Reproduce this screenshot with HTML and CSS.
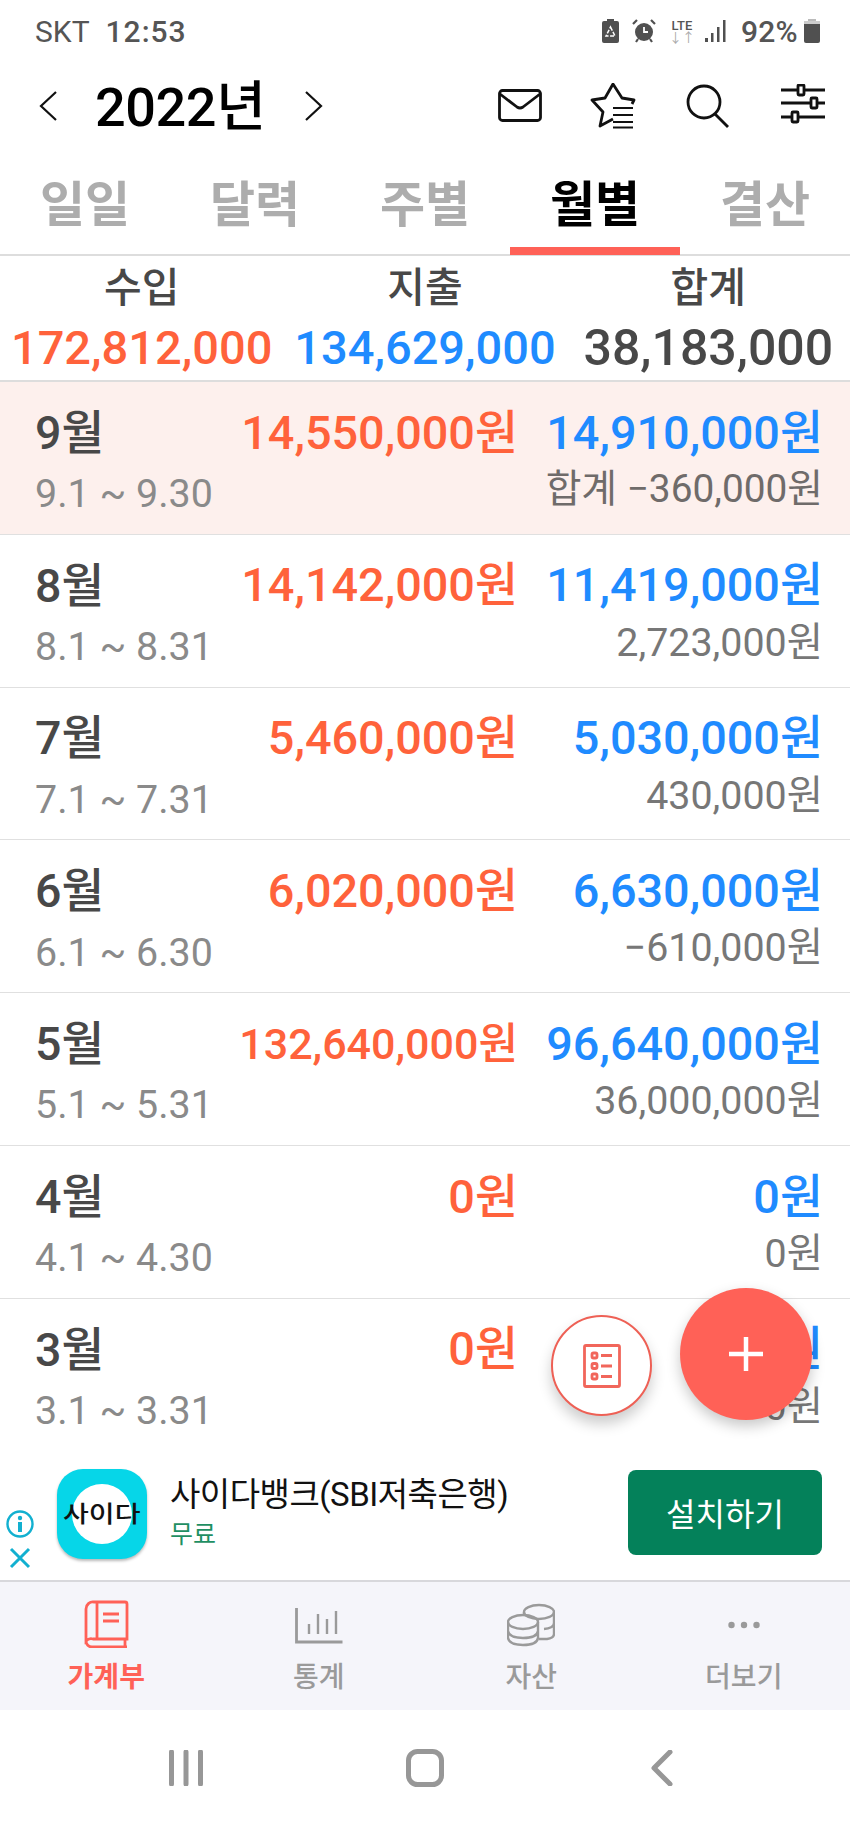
FILE: index.html
```html
<!DOCTYPE html>
<html lang="ko">
<head>
<meta charset="utf-8">
<title>가계부</title>
<link rel="stylesheet" href="styles.css">
</head>
<body>
<div class="phone">
  <div class="status">
    <div class="status-left"><span>SKT</span><span>12:53</span></div>
    <div class="status-right">
      <svg class="ic-batrec" viewBox="0 0 17 24"><path fill="#505050" d="M5 0h7v2h3a2 2 0 0 1 2 2v18a2 2 0 0 1-2 2H2a2 2 0 0 1-2-2V4a2 2 0 0 1 2-2h3z"/><path fill="none" stroke="#fff" stroke-width="1.5" stroke-dasharray="4 1.500" d="M8.500 8l4.500 9H4z"/></svg>
      <svg class="ic-alarm" viewBox="0 0 24 24"><circle cx="12" cy="13" r="9" fill="#505050"/><path d="M1 5l4-4M23 5l-4-4M6 20l-2 3M18 20l2 3" stroke="#505050" stroke-width="2.200" fill="none"/><path d="M12 8v5h4" stroke="#fff" stroke-width="1.800" fill="none"/></svg>
      <div class="lte"><span class="lte-t">LTE</span><span class="lte-a">↓↑</span></div>
      <svg class="ic-signal" viewBox="0 0 22 24"><g fill="#505050"><rect x="0" y="19" width="3" height="4"/><rect x="6" y="14" width="2.500" height="9"/><rect x="12" y="8" width="2.500" height="15"/><rect x="18" y="1" width="2.500" height="22"/></g></svg>
      <span class="pct">92%</span>
      <svg class="ic-bat" viewBox="0 0 16 24"><rect x="4" y="0" width="8" height="3" fill="#bbb"/><rect x="0" y="2" width="16" height="4" fill="#ccc"/><path d="M0 5h16v17a2 2 0 0 1-2 2H2a2 2 0 0 1-2-2z" fill="#505050"/></svg>
    </div>
  </div>

  <header class="header">
    <div class="year-nav">
      <svg class="chev" viewBox="0 0 18 30"><path d="M17 1L2 15l15 14" /></svg>
      <span class="year">2022년</span>
      <svg class="chev" viewBox="0 0 18 30"><path d="M1 1l15 14L1 29" /></svg>
    </div>
    <div class="actions">
      <svg class="ic-mail" viewBox="0 0 44 34"><rect x="1.500" y="1.500" width="41" height="30" rx="3"/><path d="M2 5l17 13q3 2 6 0L42 5"/></svg>
      <svg class="ic-star" viewBox="0 0 46 46"><path d="M23 36L10 43l3-14L2 17l13-2L23 1l9 14 12 2-2 4"/><path d="M23 25h20M23 32h20M23 39h20M23 44.500h20" stroke-width="1.800"/></svg>
      <svg class="ic-search" viewBox="0 0 44 44"><circle cx="18" cy="18" r="16"/><path d="M29 30l13 13"/></svg>
      <svg class="ic-sliders" viewBox="0 0 44 40"><path d="M0 6h17M24 6h20M0 19h30M37 19h7M0 33h10M17 33h27"/><rect x="17" y="1" width="6" height="10" rx="1"/><rect x="30" y="14" width="6" height="10" rx="1"/><rect x="11" y="28" width="6" height="10" rx="1"/></svg>
    </div>
  </header>

  <nav class="tabs">
    <div class="tab">일일</div>
    <div class="tab">달력</div>
    <div class="tab">주별</div>
    <div class="tab active">월별</div>
    <div class="tab">결산</div>
  </nav>

  <section class="summary">
    <div class="sum-col"><div class="sum-label">수입</div><div class="sum-val income">172,812,000</div></div>
    <div class="sum-col"><div class="sum-label">지출</div><div class="sum-val expense">134,629,000</div></div>
    <div class="sum-col"><div class="sum-label">합계</div><div class="sum-val total">38,183,000</div></div>
  </section>

  <main class="list">
    <div class="row current">
      <div class="month">9월</div><div class="amt income">14,550,000원</div><div class="amt expense">14,910,000원</div>
      <div class="range">9.1 ~ 9.30</div><div class="sub">합계 −360,000원</div>
    </div>
    <div class="row">
      <div class="month">8월</div><div class="amt income">14,142,000원</div><div class="amt expense">11,419,000원</div>
      <div class="range">8.1 ~ 8.31</div><div class="sub">2,723,000원</div>
    </div>
    <div class="row">
      <div class="month">7월</div><div class="amt income">5,460,000원</div><div class="amt expense">5,030,000원</div>
      <div class="range">7.1 ~ 7.31</div><div class="sub">430,000원</div>
    </div>
    <div class="row">
      <div class="month">6월</div><div class="amt income">6,020,000원</div><div class="amt expense">6,630,000원</div>
      <div class="range">6.1 ~ 6.30</div><div class="sub">−610,000원</div>
    </div>
    <div class="row">
      <div class="month">5월</div><div class="amt income shrunk">132,640,000원</div><div class="amt expense">96,640,000원</div>
      <div class="range">5.1 ~ 5.31</div><div class="sub">36,000,000원</div>
    </div>
    <div class="row">
      <div class="month">4월</div><div class="amt income">0원</div><div class="amt expense">0원</div>
      <div class="range">4.1 ~ 4.30</div><div class="sub">0원</div>
    </div>
    <div class="row">
      <div class="month">3월</div><div class="amt income">0원</div><div class="amt expense">0원</div>
      <div class="range">3.1 ~ 3.31</div><div class="sub">0원</div>
    </div>
  </main>

  <div class="fab-small">
    <svg viewBox="0 0 38 44"><rect x="1.500" y="1.500" width="35" height="41" rx="1.500"/><rect x="9" y="9" width="5" height="5" rx="1.500"/><rect x="9" y="19.500" width="5" height="5" rx="1.500"/><rect x="9" y="30" width="5" height="5" rx="1.500"/><path d="M18 11.500h11M18 22h11M18 32.500h11"/></svg>
  </div>
  <div class="fab-big">
    <svg viewBox="0 0 34 34"><path d="M17 0v34M0 17h34"/></svg>
  </div>

  <aside class="ad">
    <div class="ad-side">
      <svg class="ad-info" viewBox="0 0 28 28"><circle cx="14" cy="14" r="12.500"/><circle class="fill" cx="14" cy="8" r="2.200"/><rect class="fill" x="12" y="12" width="4" height="10"/></svg>
      <svg class="ad-x" viewBox="0 0 22 22"><path d="M2 2l18 18M20 2L2 20"/></svg>
    </div>
    <div class="ad-logo"><div class="ad-disc"></div><span class="ad-logo-t">사이다</span></div>
    <div class="ad-text">
      <div class="ad-title">사이다뱅크(SBI저축은행)</div>
      <div class="ad-free">무료</div>
    </div>
    <div class="ad-btn">설치하기</div>
  </aside>

  <nav class="bottom">
    <div class="bt active">
      <svg viewBox="0 0 44 48"><path d="M10 2h31a2 2 0 0 1 2 2v35H9a7 7 0 0 0-7 2V9a7 7 0 0 1 8-7zM13 2v37M2 39v2a6 6 0 0 0 6 6h35M41 39v8M19 14h16M19 21h16"/></svg>
      <span>가계부</span>
    </div>
    <div class="bt">
      <svg viewBox="0 0 48 48"><path d="M1.500 8v34h46" stroke-width="2.800"/><path d="M14 24v10M23 14v20M32 19v15M41 11v23"/></svg>
      <span>통계</span>
    </div>
    <div class="bt">
      <svg viewBox="0 0 48 44"><ellipse cx="32" cy="10" rx="15" ry="7"/><path d="M17 10v4M47 10v22q0 4-7 5h-8M47 21q0 5-10 6"/><ellipse cx="16" cy="20" rx="15" ry="7"/><path d="M1 20v16q1 7 15 7t15-7V20M1 29q1 7 15 7t15-7"/></svg>
      <span>자산</span>
    </div>
    <div class="bt">
      <svg viewBox="0 0 48 48"><g class="dots"><circle cx="11.500" cy="25" r="3.200"/><circle cx="24" cy="25" r="3.200"/><circle cx="36.500" cy="25" r="3.200"/></g></svg>
      <span>더보기</span>
    </div>
  </nav>

  <div class="sysnav">
    <svg class="sys-menu" viewBox="0 0 34 36"><path d="M2.500 2v32M17 2v32M31.500 2v32"/></svg>
    <svg class="sys-home" viewBox="0 0 38 38"><rect x="2.500" y="2.500" width="33" height="33" rx="9"/></svg>
    <svg class="sys-back" viewBox="0 0 22 36"><path d="M19 2L3 18l16 16"/></svg>
  </div>
</div>
</body>
</html>
```
FILE: styles.css
```css
* { box-sizing: border-box; }
html, body { margin: 0; padding: 0; background: #fff; }
body { font-family: Roboto, "Noto Sans CJK KR", sans-serif; }
svg { display: block; fill: none; }

.phone { position: relative; width: 850px; height: 1823px; overflow: hidden; display: flex; flex-direction: column; background: #fff; }

/* status bar */
.status { height: 60px; flex: none; display: flex; justify-content: space-between; align-items: center; padding: 2px 30px 0 35px; color: #555; font-size: 30px; }
.status-left { display: flex; gap: 16px; }
.status-left span:last-child { font-weight: 500; letter-spacing: 1px; }
.status-right { display: flex; align-items: center; }
.ic-batrec { width: 17px; height: 24px; margin-right: 13px; }
.ic-alarm { width: 24px; height: 24px; margin-right: 13px; }
.lte { width: 26px; margin-right: 10px; display: flex; flex-direction: column; align-items: center; line-height: 1; }
.lte-t { font-size: 13px; font-weight: 500; color: #555; }
.lte-a { font-size: 13px; color: #aaa; margin-top: -1px; }
.ic-signal { width: 22px; height: 24px; margin-right: 14px; }
.pct { font-size: 30px; font-weight: 500; color: #555; letter-spacing: .3px; }
.ic-bat { width: 16px; height: 24px; margin-left: 6px; }

/* header */
.header { height: 86px; flex: none; display: flex; justify-content: space-between; align-items: center; padding: 6px 25px 0 39px; }
.year-nav { display: flex; align-items: center; }
.chev { width: 18px; height: 30px; stroke: #111; stroke-width: 2.200; }
.year { font-size: 54px; font-weight: 500; color: #000; margin: 3px 40px 0 38px; line-height: 1; letter-spacing: -.4px; }
.actions { display: flex; align-items: center; }
.actions svg { stroke: #111; stroke-width: 2.800; stroke-linejoin: round; }
.ic-mail { width: 44px; height: 34px; margin-right: 48px; }
.ic-star { width: 46px; height: 46px; margin-right: 50px; }
.ic-search { width: 44px; height: 44px; margin-right: 51px; }
.ic-sliders { width: 44px; height: 40px; margin-top: -4px; }

/* tabs */
.tabs { height: 110px; flex: none; display: grid; grid-template-columns: repeat(5, 1fr); border-bottom: 2px solid #ddd; }
.tab { display: flex; align-items: center; justify-content: center; padding-top: 8px; font-size: 49px; font-weight: 700; color: #adadad; border-bottom: 8px solid transparent; margin-bottom: -1px; }
.tab.active { color: #000; border-bottom-color: #ff6157; }

/* summary */
.summary { height: 126px; flex: none; display: grid; grid-template-columns: repeat(3, 1fr); text-align: center; border-bottom: 2px solid #ddd; }
.sum-col { display: flex; flex-direction: column; align-items: center; }
.sum-label { height: 64px; line-height: 64px; font-size: 41px; font-weight: 500; color: #484848; }
.sum-val { font-size: 47px; line-height: 56px; font-weight: 500; }
.sum-val.total { font-size: 50px; color: #484848; }
.income { color: #ff623b; }
.expense { color: #1f8bff; }

/* list */
.list { height: 1068px; flex: none; overflow: hidden; }
.row { height: 152.8px; display: grid; grid-template-columns: 1fr auto 305px; grid-template-rows: 78px 44px; padding: 12px 27px 0 35px; border-bottom: 1px solid #e0e0e0; align-items: center; }
.row:last-child { border-bottom: 0; }
.row.current { background: #fdf0ed; }
.month { font-size: 46.5px; font-weight: 500; color: #484848; line-height: 1; }
.amt { font-size: 46.8px; font-weight: 500; text-align: right; line-height: 1; white-space: nowrap; }
.amt.shrunk { font-size: 43px; }
.range { font-size: 39.4px; color: #8a8a8a; line-height: 1; }
.sub { grid-column: 2 / 4; align-self: start; margin-top: -2px; font-size: 39.4px; color: #777; font-weight: 400; text-align: right; line-height: 1; }
.current .sub { color: #6f6b6a; font-size: 38.8px; }

/* FABs */
.fab-small { position: absolute; left: 551px; top: 1315px; width: 101px; height: 101px; border: 2px solid #ee6055; border-radius: 50%; background: #fff; display: flex; align-items: center; justify-content: center; box-shadow: 0 8px 14px rgba(0,0,0,.2); }
.fab-small svg { width: 38px; height: 44px; stroke: #f1665b; stroke-width: 2.800; }
.fab-big { position: absolute; left: 680px; top: 1288px; width: 132px; height: 132px; border-radius: 50%; background: #ff6157; display: flex; align-items: center; justify-content: center; box-shadow: 0 6px 14px rgba(0,0,0,.22); }
.fab-big svg { width: 34px; height: 34px; stroke: #fff; stroke-width: 4.500; }

/* ad */
.ad { position: relative; height: 132px; flex: none; display: flex; align-items: center; background: #fff; padding: 0 28px 0 0; border-bottom: 2px solid #d8d8dc; }
.ad-side { width: 57px; height: 132px; flex: none; display: flex; flex-direction: column; align-items: flex-start; padding: 61px 0 0 6px; gap: 9px; }
.ad-info { width: 28px; height: 28px; stroke: #12b0d0; stroke-width: 2.400; }
.ad-info .fill { fill: #12b0d0; stroke: none; }
.ad-x { width: 22px; height: 22px; margin-left: 3px; stroke: #12b0d0; stroke-width: 3; }
.ad-logo { position: relative; width: 90px; height: 90px; flex: none; border-radius: 26px; background: #06d6e8; box-shadow: 0 2px 3px rgba(0,0,0,.28); display: flex; align-items: center; justify-content: center; overflow: hidden; margin-top: -2px; }
.ad-disc { position: absolute; left: 15px; top: 15px; width: 60px; height: 60px; border-radius: 50%; background: #fff; }
.ad-logo-t { position: relative; font-size: 23px; font-weight: 500; color: #111; line-height: 1; transform: scaleX(1.22); }
.ad-text { flex: 1; margin-left: 23px; margin-top: -6px; }
.ad-title { font-size: 33px; color: #111; line-height: 44px; letter-spacing: -.5px; }
.ad-free { font-size: 25px; color: #1f8f63; line-height: 32px; margin-top: 2px; }
.ad-btn { width: 194px; height: 85px; flex: none; border-radius: 8px; background: #04815a; color: #fff; font-size: 32px; display: flex; align-items: center; justify-content: center; margin-top: -6px; }

/* bottom nav */
.bottom { height: 128px; flex: none; display: grid; grid-template-columns: repeat(4, 1fr); background: #f5f5fa; }
.bt { display: flex; flex-direction: column; align-items: center; color: #9a9a9a; font-size: 28px; font-weight: 500; padding-top: 18px; }
.bt svg { width: 48px; height: 48px; stroke: #9a9a9a; stroke-width: 2.400; margin-bottom: 8px; }
.bt span { line-height: 44px; }
.bt.active { color: #ff6157; font-weight: 700; }
.bt.active svg { stroke: #ff6157; stroke-width: 2.800; }
.dots circle { fill: #9a9a9a; stroke: none; }

/* system nav */
.sysnav { flex: 1; display: flex; align-items: center; position: relative; padding: 2px 0 0 169px; }
.sysnav svg { stroke: #979797; stroke-width: 5; stroke-linecap: round; }
.sys-menu { width: 34px; height: 36px; margin-right: 203px; }
.sys-home { width: 38px; height: 38px; margin-right: 207px; }
.sys-back { width: 22px; height: 36px; stroke-linejoin: round; }
```
